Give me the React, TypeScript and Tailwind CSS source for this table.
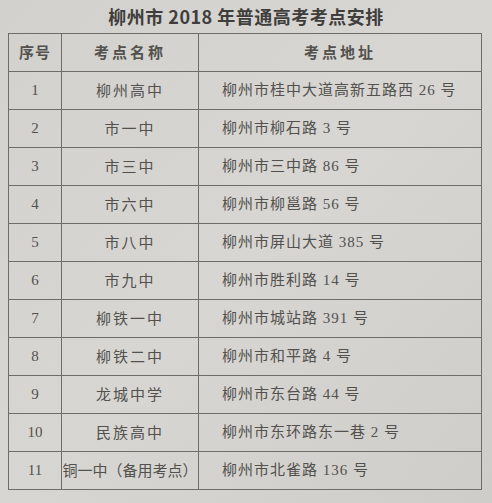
const rows: [string, string, string][] = [
  ["1", "柳州高中", "柳州市桂中大道高新五路西 26 号"],
  ["2", "市一中", "柳州市柳石路 3 号"],
  ["3", "市三中", "柳州市三中路 86 号"],
  ["4", "市六中", "柳州市柳邕路 56 号"],
  ["5", "市八中", "柳州市屏山大道 385 号"],
  ["6", "市九中", "柳州市胜利路 14 号"],
  ["7", "柳铁一中", "柳州市城站路 391 号"],
  ["8", "柳铁二中", "柳州市和平路 4 号"],
  ["9", "龙城中学", "柳州市东台路 44 号"],
  ["10", "民族高中", "柳州市东环路东一巷 2 号"],
  ["11", "铜一中（备用考点）", "柳州市北雀路 136 号"],
];

const cell = "border-r-[1.5px] border-b-[1.5px] border-[#6e6d6a] flex items-center";

const App: React.FC = () => {
  return (
    <div className="w-[492px] h-[503px] overflow-hidden bg-linear-to-br from-[#d3d1cd] via-[#d8d6d2] to-[#cfcdc9] text-[#52514e] font-['Noto_Sans_CJK_SC',sans-serif]">
      <h1 className="h-[33px] pt-[3px] text-center text-[18px] font-bold leading-[26px] tracking-[0.5px] text-[#3f3e3c]">
        柳州市 2018 年普通高考考点安排
      </h1>
      <div className="ml-[8px] w-[474px] grid grid-cols-[53px_137px_1fr] auto-rows-[38px] border-l-[1.5px] border-t-[1.5px] border-[#6e6d6a]">
        <div className={`${cell} justify-center text-[15px] font-bold tracking-[1px]`}>序号</div>
        <div className={`${cell} justify-center text-[15px] font-bold tracking-[3px]`}>考点名称</div>
        <div className={`${cell} justify-center text-[15px] font-bold tracking-[3px]`}>考点地址</div>
        {rows.map(([no, name, addr]) => (
          <Row key={no} no={no} name={name} addr={addr} />
        ))}
      </div>
    </div>
  );
};

const Row: React.FC<{ no: string; name: string; addr: string }> = ({ no, name, addr }) => (
  <>
    <div className={`${cell} justify-center font-['Liberation_Serif',serif] text-[15px]`}>{no}</div>
    <div className={`${cell} justify-center text-[15px] ${name.length > 5 ? "tracking-[0px]" : "tracking-[2px]"} whitespace-nowrap`}>
      {name}
    </div>
    <div className={`${cell} pl-[23px] text-[15px] tracking-[1px] whitespace-nowrap font-['Liberation_Serif','Noto_Sans_CJK_SC',serif]`}>
      {addr}
    </div>
  </>
);

export default App;
